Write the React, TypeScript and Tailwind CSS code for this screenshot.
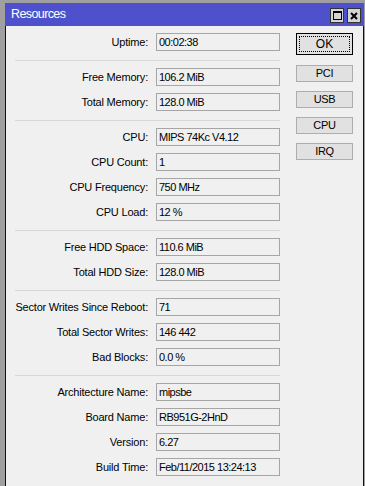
import React from 'react';

type Row = [string, string];

const groups: Row[][] = [
  [['Uptime:', '00:02:38']],
  [
    ['Free Memory:', '106.2 MiB'],
    ['Total Memory:', '128.0 MiB'],
  ],
  [
    ['CPU:', 'MIPS 74Kc V4.12'],
    ['CPU Count:', '1'],
    ['CPU Frequency:', '750 MHz'],
    ['CPU Load:', '12 %'],
  ],
  [
    ['Free HDD Space:', '110.6 MiB'],
    ['Total HDD Size:', '128.0 MiB'],
  ],
  [
    ['Sector Writes Since Reboot:', '71'],
    ['Total Sector Writes:', '146 442'],
    ['Bad Blocks:', '0.0 %'],
  ],
  [
    ['Architecture Name:', 'mipsbe'],
    ['Board Name:', 'RB951G-2HnD'],
    ['Version:', '6.27'],
    ['Build Time:', 'Feb/11/2015 13:24:13'],
  ],
];

const Field: React.FC<{ label: string; value: string }> = ({ label, value }) => (
  <div className="flex items-center h-[18px]">
    <div className="w-[133px] text-right whitespace-nowrap tracking-[-0.2px]">{label}</div>
    <div className="ml-[8px] w-[124px] h-[18px] border border-[#a6a6a6] bg-[#f0f0f0] pl-[2px] leading-[16px] whitespace-nowrap tracking-[-0.5px]">
      {value}
    </div>
  </div>
);

const SideButton: React.FC<{ label: string }> = ({ label }) => (
  <button className="w-[57px] h-[17px] bg-[#e1e1e1] border border-[#adadad] leading-[15px] text-center text-black tracking-[-0.3px]">
    {label}
  </button>
);

export default function App() {
  return (
    <div
      className="w-[365px] h-[486px] bg-[#a0a0a0] pt-[3px] pl-[5px] text-[11px] text-black"
      style={{ fontFamily: '"Liberation Sans", Arial, sans-serif' }}
    >
      <div className="w-[359px] h-[483px] flex flex-col">
        {/* title bar */}
        <div className="h-[23px] bg-[#4f51cc] flex items-center pl-[6px] pr-[3px]">
          <span className="text-white text-[12.5px] flex-1 tracking-[-0.6px]">Resources</span>
          <div className="flex gap-[3px] mt-[2px]">
            <div className="w-[14px] h-[15px] bg-[#d4d4d4] border border-[#333] flex items-center justify-center">
              <div className="w-[9px] h-[9px] border border-black border-t-2" />
            </div>
            <div className="w-[14px] h-[15px] bg-[#d4d4d4] border border-[#333] flex items-center justify-center">
              <svg width="8" height="8" viewBox="0 0 8 8">
                <path d="M1 1 L7 7 M7 1 L1 7" stroke="black" strokeWidth="2" />
              </svg>
            </div>
          </div>
        </div>

        {/* body */}
        <div className="flex-1 bg-[#f0f0f0] border-l border-r border-[#111] flex pt-[7px] pl-[9px]">
          <div className="flex flex-col">
            {groups.map((g, gi) => (
              <React.Fragment key={gi}>
                {gi > 0 && <div className="mt-[9px] mb-[7px] h-px w-[265px] bg-[#d7d7d7]" />}
                <div className="flex flex-col gap-[7px]">
                  {g.map(([l, v]) => (
                    <Field key={l} label={l} value={v} />
                  ))}
                </div>
              </React.Fragment>
            ))}
          </div>

          <div className="ml-[16px] flex flex-col">
            <button className="w-[57px] h-[22px] border border-black bg-[#e1e1e1] p-[2px]">
              <div className="w-full h-full border border-dotted border-black flex items-center justify-center text-[12px]">
                OK
              </div>
            </button>
            <div className="mt-[10px] flex flex-col gap-[9px]">
              <SideButton label="PCI" />
              <SideButton label="USB" />
              <SideButton label="CPU" />
              <SideButton label="IRQ" />
            </div>
          </div>
        </div>
      </div>
    </div>
  );
}
